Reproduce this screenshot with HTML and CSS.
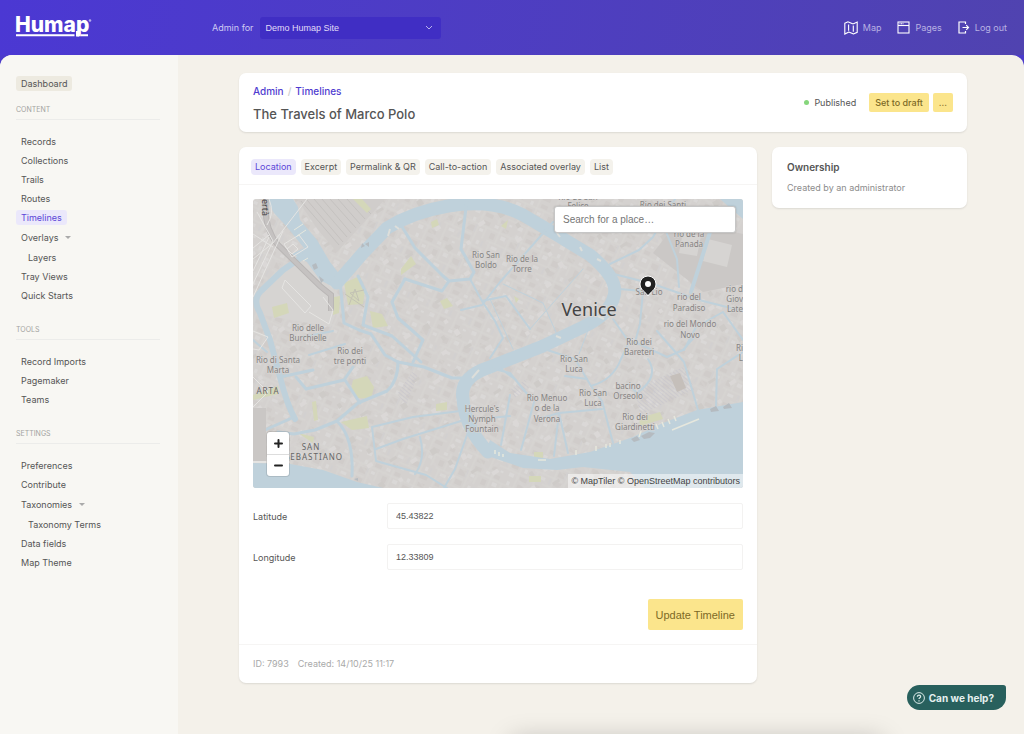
FILE: index.html
```
<!DOCTYPE html>
<html lang="en">

<head>
    <meta charset="UTF-8">
    <meta name="viewport" content="width=device-width, initial-scale=1.0">
    <title>The Travels of Marco Polo - Humap Admin</title>
    <link rel="stylesheet" href="styles.css">
</head>

<body>
    <header class="topbar">
        <a href="#" class="logo" aria-label="Humap">
            <svg width="78" height="24" viewBox="0 0 78 24">
                <text class="logo-text" x="-1" y="16">Humap</text>
                <path d="M0 19.300h58.500M65 19.300h7" stroke="#fff" stroke-width="2" />
                <path d="M61.500 15v5.500" stroke="#fff" stroke-width="3" />
                <circle cx="74" cy="4.500" r="1.300" fill="#b3a9ec" />
            </svg>
        </a>
        <div class="site-picker">
            <label for="site">Admin for</label>
            <div class="select-wrap">
                <select id="site">
                    <option>Demo Humap Site</option>
                </select>
                <svg class="chevron" width="8" height="6" viewBox="0 0 8 6" fill="none" stroke="#b9b2ee">
                    <path d="M1 1l3 3 3-3" />
                </svg>
            </div>
        </div>
        <nav class="topnav">
            <a href="#">
                <svg width="14" height="14" viewBox="0 0 14 14" fill="none" stroke="#fff" stroke-width="1.100">
                    <path d="M.8 2.200l2.700-1.200q.6-.2 1 .1l4 1.600q.5.200 1 0L13.200 1v10.300l-3.200 1.500q-.6.200-1-.1l-3.600-1.500q-.6-.2-1 0L.8 13z" />
                    <path d="M4.600 3.500v6.200M9.300 4.500v6.200" />
                </svg>
                <span>Map</span>
            </a>
            <a href="#">
                <svg width="13" height="13" viewBox="0 0 13 13" fill="none" stroke="#fff" stroke-width="1.100">
                    <rect x="1" y="1" width="11" height="11" />
                    <path d="M1 4.500h11" />
                    <path d="M2.500 2.700h4" stroke-dasharray="1 .5" />
                </svg>
                <span>Pages</span>
            </a>
            <a href="#">
                <svg width="12" height="13" viewBox="0 0 12 13" fill="none" stroke="#fff" stroke-width="1.200">
                    <path d="M7.500 3V1H1v11h6.500v-2" />
                    <path d="M4.500 6.500h6M8.200 4.200l2.300 2.300-2.300 2.300" />
                </svg>
                <span>Log out</span>
            </a>
        </nav>
    </header>

    <div class="page">
        <aside class="sidebar">
            <a href="#" class="pill dashboard">Dashboard</a>

            <h2>Content</h2>
            <ul>
                <li><a href="#">Records</a></li>
                <li><a href="#">Collections</a></li>
                <li><a href="#">Trails</a></li>
                <li><a href="#">Routes</a></li>
                <li><a href="#" class="active">Timelines</a></li>
                <li class="group"><a href="#">Overlays</a><span class="caret"></span></li>
                <li class="group sub"><a href="#">Layers</a></li>
                <li><a href="#">Tray Views</a></li>
                <li><a href="#">Quick Starts</a></li>
            </ul>

            <h2>Tools</h2>
            <ul>
                <li><a href="#">Record Imports</a></li>
                <li><a href="#">Pagemaker</a></li>
                <li><a href="#">Teams</a></li>
            </ul>

            <h2>Settings</h2>
            <ul>
                <li><a href="#">Preferences</a></li>
                <li><a href="#">Contribute</a></li>
                <li class="group"><a href="#">Taxonomies</a><span class="caret"></span></li>
                <li class="group sub"><a href="#">Taxonomy Terms</a></li>
                <li><a href="#">Data fields</a></li>
                <li><a href="#">Map Theme</a></li>
            </ul>
        </aside>

        <main class="content">
            <section class="card title-card">
                <div>
                    <div class="breadcrumb"><a href="#">Admin</a><span>/</span><a href="#">Timelines</a></div>
                    <h1>The Travels of Marco Polo</h1>
                </div>
                <div class="actions">
                    <span class="status">Published</span>
                    <button class="btn">Set to draft</button>
                    <button class="btn more">...</button>
                </div>
            </section>

            <section class="card editor">
                <nav class="tabs">
                    <a href="#" class="active">Location</a>
                    <a href="#">Excerpt</a>
                    <a href="#">Permalink &amp; QR</a>
                    <a href="#">Call-to-action</a>
                    <a href="#">Associated overlay</a>
                    <a href="#">List</a>
                </nav>

                <form class="editor-body" onsubmit="return false">
                    <div class="map">
                        <svg class="map-canvas" viewBox="0 0 490 289" preserveAspectRatio="xMidYMid slice">
                            <defs>
                                <pattern id="blocks" width="46" height="38" patternUnits="userSpaceOnUse" patternTransform="rotate(24)">
                                    <path d="M0 7h46M0 19h30M12 29h34M9 0v19M21 7v22M33 0v38M4 19v19M41 7v12" stroke="#dcdad8" stroke-width=".8" />
                                    <path d="M2 1h4v3H2zM12 9h5v4h-5zM25 2h3v4h-3zM35 10h4v3h-4zM7 22h6v3H7zM24 31h5v4h-5zM37 22h3v4h-3zM15 33h3v2h-3z" fill="#dedddc" />
                                    <path d="M11 1h6v4h-6zM1 10h5v6H1zM23 10h7v6h-7zM36 1h7v4h-7zM6 32h5v4H6zM23 21h7v5h-7zM35 31h8v4h-8z" fill="#cdc9c6" />
                                    <path d="M18 20v7M43 21v6M31 8v8" stroke="#c7c7d3" stroke-width=".6" />
                                </pattern>
                                <pattern id="blocks2" width="62" height="54" patternUnits="userSpaceOnUse" patternTransform="rotate(-33)">
                                    <path d="M0 12h40M20 31h42M8 0v54M29 12v19M48 0v31" stroke="#d9d7d5" stroke-width=".8" />
                                    <path d="M12 15h6v4h-6zM34 4h5v6h-5zM51 35h7v4h-7zM31 44h4v4h-4z" fill="#dfdddc" />
                                    <path d="M20 2h4v5h-4zM34 23h8v3h-8zM11 37h6v6h-6z" fill="#cac6c4" />
                                </pattern>
                                <pattern id="hatch" width="3" height="3" patternUnits="userSpaceOnUse" patternTransform="rotate(40)">
                                    <path d="M0 0h3" stroke="#c3c2cb" />
                                </pattern>
                            </defs>

                            <rect width="490" height="289" fill="#d4d1cf" />
                            <g opacity=".6">
                                <rect width="490" height="289" fill="url(#blocks)" />
                                <rect width="490" height="289" fill="url(#blocks2)" />
                            </g>

                            <!-- station and rail yard -->
                            <path d="M44 0h88l-8 9-40 44-19-22z" fill="#d0cdcb" />
                            <g stroke="#c2bfbd" stroke-width=".8">
                                <path d="M48 2l38 44M54 1l36 42M61 0l33 38M69 0l29 34M77 0l26 29M85 0l22 25M94 0l18 20M103 0l15 15" />
                            </g>
                            <path d="M400 54l26-33 64 14v50l-40 8z" fill="#cbc8c6" />
                            <path d="M430 33l18 4-4 20-18-3zM455 40l24 6-5 22-24-6z" fill="#d6d4d2" />
                            <path d="M382 190l48-22 12 22-55 26z" fill="url(#hatch)" />
                            <path d="M144 195l15-22 6 3-12 30zM258 190l14-9 4 8-14 10z" fill="url(#hatch)" />
                            <path d="M417 177l10-3 6 15-9 4z" fill="#c5bfba" />
                            <path d="M0 101l20-26 27-18 41 41-10 30-74-13z" fill="#d6d4d2" />

                            <!-- parks -->
                            <g fill="#d4d7b9">
                                <path d="M91 84l16-7 5 14-2 14-15 1zM81 98l6-1-1 17-6 2zM19 108l15-4 2 10-15 5zM100 0h9l9 10-4 4zM148 70l10-13 5 8-15 11zM178 23l6-3 2 6-7 3zM187 102l7-3 6 8-9 3zM117 112l12 3 6 12-15 2z" />
                                <path d="M100 181l14-4 7 11-3 12-13-1-7-9zM88 223l26-6 2 12-17 2zM183 205l11-2v8l-11 1zM59 203l4-1 2 19-4 1zM45 234l16 4-1 6zM386 219l21-6 3 7-23 7zM248 27l7-6-2 9zM261 97l5 3-3 4zM281 253h9v6h-9zM276 277h12v6h-12zM0 196l25-9v8L0 201z" />
                            </g>

                            <!-- water -->
                            <g fill="#bfd1db">
                                <path d="M13 0h27l5 8 2 13 17 20 13 22 10 13-7 12-13-7-13-18-15-8 12-6-17-21-13-14z" />
                                <path d="M0 264l37 1 33 6 34 12 26 6H0z" />
                                <path d="M237 241l20 13 40 6 40-7 43-15 30-14 34-13 46-8v86H392l-15-16-47-5-26 3-34-2-38-13z" />
                                <path d="M467 0h23v20z" />
                            </g>
                            <g fill="none" stroke="#bfd1db" stroke-linecap="round" stroke-linejoin="round">
                                <path d="M84 84L110 54L134 29Q160 13 195 7Q240 0 270 16L304 36L337 56Q366 80 361 97Q357 115 330 128L290 147L237 168Q206 178 210 200Q212 229 235 253" stroke-width="13" />
                                <path d="M52 56L30 71L8 92Q-1 101 7 114L17 141L27 178Q34 206 42 220" stroke-width="6" />
                                <g stroke-width="3">
                                    <path d="M87 82L91 124L106 131L118 135L132 156L145 163L171 168L199 179L210 179" />
                                    <path d="M105 77L115 98L110 126L139 137L168 163" />
                                    <path d="M148 26L162 49L190 77L196 82L217 80L221 73L208 50L214 0M196 82L189 92L152 80" />
                                    <path d="M217 80L229 102L242 122L250 139L237 159M208 111L229 106L247 83L300 23" stroke-width="2" />
                                    <path d="M152 80L139 103L145 119L170 141L160 163" />
                                    <path d="M145 163Q145 182 134 192L105 204L84 222L62 231L41 235L25 233M84 222Q101 239 99 277M92 181L107 204M43 178L53 190L91 181L100 168M27 178L60 171M12 231L41 218" />
                                    <path d="M119 228L160 218L207 212M119 228L123 262L173 276L194 289M123 250L150 240L208 222M167 238Q173 260 162 275M214 236L202 270L191 289" stroke-width="2" />
                                </g>
                                <g stroke-width="2">
                                    <path d="M357 65L386 51L400 38L422 0M357 74L400 85L446 101L490 112M410 25L424 60L426 88" />
                                    <path d="M458 30L438 93" stroke-width="4" />
                                    <path d="M366 90L390 92L387 125L382 143L414 158L430 151L443 136" />
                                    <path d="M360 120L376 143L368 160Q360 181 338 187L322 160L291 150" />
                                    <path d="M404 132L425 156L431 163L445 211M470 113L490 141M463 208L464 170L490 153M431 151L443 128L470 113" />
                                    <path d="M338 187L349 202L360 244M312 177L334 180M395 160Q407 178 384 194L375 185" />
                                    <path d="M237 169L257 174L270 190L281 203M247 169L263 181M281 203L268 251M289 219L306 214L301 257M306 214L315 254M257 196L248 246M306 214L349 210M237 219L257 217" />
                                    <path d="M229 102L253 97L277 130M0 141L14 153M50 138L80 132M56 156L92 145" />
                                    <path d="M237 100L260 150M277 130L330 70M337 126L326 155M250 85L290 104L306 140" stroke-width="1" />
                                </g>
                            </g>

                            <!-- roads and jetties -->
                            <path d="M13 0Q10 28 25 46L67 87L78 96v16" fill="none" stroke="#bab7b6" stroke-width="6" />
                            <path d="M13 0Q10 28 25 46L67 87L78 96v16" fill="none" stroke="#c5c2c1" stroke-width="4" />
                            <g fill="none" stroke="#e5e4e2">
                                <path d="M0 85L20 42L4 13M0 72L16 38M0 60L20 44L54 0M0 49l16-13M0 35l20 13M16 0Q22 14 14 26M0 98L30 32" />
                                <path d="M31 45l15-9 9 12-16 10zM34 50l6-5 5 5-6 5zM56 113l20 12 4-14-10-13M32 81l26 26-6 7-23-25zM0 132l15 6-9 13-6-1M0 178l15 15-15 15" />
                            </g>
                            <path d="M0 209h13v54H0z" fill="#cac7c5" />
                            <path d="M0 263h37" stroke="#e5e4e2" stroke-width="2" />
                            <path d="M92 95l19 13M96 106l6-16 4 12-9-8 14-3" fill="none" stroke="#c3c2b4" />
                            <path d="M41 31l9-6M44 37l9-6M50 62l5-3" fill="none" stroke="#e6e7dd" />
                            <path d="M419 231l27-11M242 255v-4m4 6v-4m4 5v-3m35 6h8m30-5v-5m20 1v-5m10 2v-4m4 3v-4m10 1v-4m19-3l2-6m17-2l-2-5m8 3l-2-5m8 2l-2-5m8 2l-2-5" fill="none" stroke="#e6e7dd" stroke-width="1.500" />
                            <path d="M219 179l7-8M137 30l-2 7M142 27l4 3M304 34l3 4m20 10l2 4m15 8l4 2m-3 55l6 3m-48 17l5 2" stroke="#dddeda" stroke-width="2" />
                            <g fill="#b5bbc0">
                                <path d="M378 240l6-3 3 4-6 2zM388 237l8-4 6 1-5 5-6 1zM457 210l6-3 3 5-8 1zM470 208l6-4 3 5-8 1zM59 66l4-2 2 5-4 2zM66 77l5 4-3 3zM112 45l4-2v5zM101 280l4-1v3zM109 44l3 3-4 2z" />
                            </g>

                            <!-- place labels -->
                            <g class="label">
                                <text x="233" y="59">Rio San</text><text x="233" y="69">Boldo</text>
                                <text x="269" y="63">Rio de la</text><text x="269" y="73">Torre</text>
                                <text x="55" y="132">Rio delle</text><text x="55" y="142">Burchielle</text>
                                <text x="97" y="155">Rio dei</text><text x="97" y="165">tre ponti</text>
                                <text x="25" y="164">Rio di Santa</text><text x="25" y="174">Marta</text>
                                <text x="325" y="1">Rio de San</text><text x="325" y="10">Felice</text>
                                <text x="410" y="9">Rio dei Santi</text>
                                <text x="436" y="38">rio de la</text><text x="436" y="48">Panada</text>
                                <text x="396" y="86">San</text><text x="396" y="96">San Lio</text>
                                <text x="436" y="101">rio del</text><text x="436" y="112">Paradiso</text>
                                <text x="437" y="128">rio del Mondo</text><text x="437" y="139">Novo</text>
                                <text x="386" y="146">Rio dei</text><text x="386" y="156">Bareteri</text>
                                <text x="321" y="163">Rio San</text><text x="321" y="173">Luca</text>
                                <text x="340" y="197">Rio San</text><text x="340" y="207">Luca</text>
                                <text x="375" y="190">bacino</text><text x="375" y="200">Orseolo</text>
                                <text x="294" y="202">Rio Menuo</text><text x="294" y="212">o de la</text><text x="294" y="223">Verona</text>
                                <text x="382" y="221">Rio dei</text><text x="382" y="231">Giardinetti</text>
                                <text x="229" y="213">Hercule's</text><text x="229" y="223">Nymph</text><text x="229" y="233">Fountain</text>
                            </g>
                            <g class="label edge">
                                <text x="490" y="93">rio d</text><text x="490" y="103">Giov</text><text x="490" y="113">Late</text>
                                <text x="490" y="152">Ri</text><text x="490" y="162">L</text>
                            </g>
                            <text class="road-label" transform="translate(9 0) rotate(90)">ertà</text>
                            <g class="district">
                                <text x="15" y="195">ARTA</text>
                                <text x="58" y="251">SAN</text>
                                <text x="61" y="261">SEBASTIANO</text>
                            </g>
                            <text class="city" x="336" y="117">Venice</text>

                            <path d="M395 97c-2-4-8-6-8-12a8 8 0 0 1 16 0c0 6-6 8-8 12z" fill="#222" stroke="#fff" />
                            <circle cx="395" cy="85" r="3" fill="#fff" />
                        </svg>
                        <input type="search" class="place-search" placeholder="Search for a place…" aria-label="Search for a place">
                        <div class="zoom">
                            <button type="button" aria-label="Zoom in"><svg width="9" height="9" viewBox="0 0 9 9"><path d="M1 4.500h7M4.500 1v7" /></svg></button>
                            <button type="button" aria-label="Zoom out"><svg width="9" height="9" viewBox="0 0 9 9"><path d="M1 4.500h7" /></svg></button>
                        </div>
                        <div class="attribution"><a href="#">© MapTiler</a> <a href="#">© OpenStreetMap contributors</a></div>
                    </div>

                    <div class="field">
                        <label for="lat">Latitude</label>
                        <input type="text" id="lat" value="45.43822">
                    </div>
                    <div class="field">
                        <label for="lng">Longitude</label>
                        <input type="text" id="lng" value="12.33809">
                    </div>
                    <div class="submit-row">
                        <button class="btn submit">Update Timeline</button>
                    </div>
                </form>

                <footer class="meta"><span>ID: 7993</span><span>Created: 14/10/25 11:17</span></footer>
            </section>

            <section class="card ownership">
                <h3>Ownership</h3>
                <p>Created by an administrator</p>
            </section>
        </main>
    </div>

    <div class="tray-shadow"></div>

    <button class="help">
        <svg width="12" height="12" viewBox="0 0 12 12" fill="none" stroke="#dcebe9">
            <circle cx="6" cy="6" r="5.400" />
            <path d="M4.400 4.800c0-2.200 3.300-2.100 3.200-.1 0 1.100-1.600 1.200-1.600 2.400" stroke-width="1.200" />
            <path d="M6 8.200v1.200" stroke-width="1.200" />
        </svg>
        Can we help?
    </button>
</body>

</html>
```

FILE: styles.css
```
* {
    box-sizing: border-box;
}

body {
    margin: 0;
    font-family: Inter, "Liberation Sans", sans-serif;
    font-size: 9px;
    line-height: 15px;
    color: #555;
    background: linear-gradient(100deg, #4b38d3, #5043b0) top / 100% 55px no-repeat #4b3acb;
    min-height: 100vh;
    display: flex;
    flex-direction: column;
}

a {
    color: inherit;
    text-decoration: none;
}

h1,
h2,
h3,
p,
ul {
    margin: 0;
    padding: 0;
    font-weight: normal;
}

ul {
    list-style: none;
}

button,
input,
select {
    font-family: "Liberation Sans", Arial, sans-serif;
    font-size: 9px;
    color: inherit;
    margin: 0;
}

button {
    border: none;
    cursor: pointer;
}

/* Header */
.topbar {
    height: 55px;
    padding: 0 17px 0 16px;
    display: flex;
    align-items: center;
    color: #cfcaf3;
}

.logo {
    width: 196px;
    height: 24px;
}

.logo svg {
    display: block;
    overflow: visible;
}

.logo-text {
    font-size: 21px;
    font-weight: 800;
    fill: #fff;
}

.site-picker {
    display: flex;
    align-items: center;
    gap: 7px;
}

.select-wrap {
    position: relative;
}

.select-wrap select {
    width: 181px;
    height: 22px;
    padding: 0 5px;
    appearance: none;
    border: none;
    border-radius: 3px;
    background: #402ec4;
    color: #e0dcf8;
}

.chevron {
    position: absolute;
    right: 8px;
    top: 8px;
}

.topnav {
    margin-left: auto;
    display: flex;
    gap: 16px;
    color: #b9b2e3;
}

.topnav a {
    display: flex;
    align-items: center;
    gap: 5px;
}

/* Sidebar */
.page {
    flex: 1;
    display: flex;
    background: #f4f1ea;
    border-radius: 12px 12px 0 0;
    overflow: hidden;
}

.sidebar {
    width: 178px;
    flex-shrink: 0;
    padding: 21px 18px 20px 16px;
    background: #f8f7f3;
}

.sidebar a {
    display: inline-block;
    padding: 0 5px;
    border-radius: 3px;
}

.sidebar .dashboard {
    background: #edeae0;
    margin-bottom: 13px;
}

.sidebar h2 {
    font-size: 7px;
    line-height: 12px;
    padding-bottom: 3px;
    border-bottom: 1px solid #ececea;
    margin-bottom: 12px;
    text-transform: uppercase;
    color: #a3a3a1;
}

.sidebar ul {
    margin-bottom: 19px;
}

.sidebar li {
    height: 19px;
    display: flex;
    align-items: center;
}

.sidebar .group {
    height: 20px;
}

.sidebar .sub {
    padding-left: 7px;
}

.sidebar .active {
    background: #ebe8fb;
    color: #5b46d8;
}

.caret {
    border: 3px solid transparent;
    border-top-color: #aaa;
    border-bottom: none;
    margin-left: 2px;
}

/* Content */
.content {
    flex: 1;
    padding: 18px 57px 51px 61px;
    display: grid;
    grid-template-columns: 1fr 195px;
    gap: 15px;
    align-items: start;
    align-content: start;
}

.card {
    background: #fff;
    border-radius: 7px;
    box-shadow: 0 1px 2px rgba(0, 0, 0, 0.1);
}

.title-card {
    grid-column: 1 / -1;
    padding: 8px 14px;
    display: flex;
    justify-content: space-between;
    align-items: center;
}

.breadcrumb {
    line-height: 20px;
    font-weight: 500;
    font-size: 10px;
    color: #4f3cd0;
}

.breadcrumb span {
    margin: 0 4px;
    color: #ccc;
}

.title-card h1 {
    font-size: 13px;
    line-height: 19px;
    padding-top: 4px;
    font-weight: 500;
}

.actions {
    display: flex;
    align-items: center;
    gap: 4px;
}

.status {
    display: flex;
    align-items: center;
    gap: 5px;
    margin-right: 9px;
}

.status::before {
    content: "";
    width: 5px;
    height: 5px;
    border-radius: 50%;
    background: #86d67c;
}

.btn {
    height: 19px;
    padding: 0 6px;
    border-radius: 2px;
    background: #fbe58c;
    color: #7d6a26;
    font-family: Inter, "Liberation Sans", sans-serif;
    font-weight: 500;
}

.tabs {
    display: flex;
    gap: 5px;
    padding: 12px 12px 9px;
    border-bottom: 1px solid #f6f5f4;
}

.tabs a {
    padding: 0 4px;
    line-height: 16px;
    border-radius: 4px;
    background: #f4f2ec;
}

.tabs .active {
    background: #ebe8fb;
    color: #5b46d8;
}

.editor-body {
    padding: 14px;
}

.map {
    position: relative;
    height: 289px;
    border-radius: 3px;
    overflow: hidden;
    margin-bottom: 15px;
}

.map-canvas {
    display: block;
    width: 100%;
    height: 100%;
}

.label {
    font-family: "Noto Sans", sans-serif;
    font-size: 8px;
    text-anchor: middle;
    fill: #858382;
    stroke: #d8d5d3;
    stroke-width: 1px;
    paint-order: stroke;
}

.label.edge {
    text-anchor: end;
}

.road-label {
    font: 9px "Noto Sans", sans-serif;
    fill: #444;
}

.district {
    font-family: "Noto Sans", sans-serif;
    font-size: 8px;
    letter-spacing: 1px;
    text-anchor: middle;
    fill: #666;
}

.city {
    font-family: "Noto Sans", sans-serif;
    font-size: 18px;
    text-anchor: middle;
    fill: #444;
    stroke: #d8d5d3;
    stroke-width: 2px;
    paint-order: stroke;
}

.place-search {
    position: absolute;
    top: 7px;
    right: 7px;
    width: 182px;
    height: 27px;
    padding: 0 8px;
    border: 1px solid #c6c6c6;
    border-radius: 3px;
    background: #fff;
    box-shadow: 0 0 2px rgba(0, 0, 0, 0.2);
    font-size: 10px;
}

.place-search::placeholder {
    color: #757575;
}

.zoom {
    position: absolute;
    left: 14px;
    bottom: 12px;
    width: 22px;
    border-radius: 3px;
    background: #fff;
    box-shadow: 0 0 0 1px rgba(0, 0, 0, 0.1);
}

.zoom button {
    display: flex;
    align-items: center;
    justify-content: center;
    width: 22px;
    height: 22px;
    padding: 0;
    background: none;
}

.zoom button + button {
    border-top: 1px solid #ddd;
}

.zoom path {
    stroke: #222;
    stroke-width: 2px;
    stroke-linecap: round;
}

.attribution {
    position: absolute;
    right: 0;
    bottom: 0;
    padding: 0 3px;
    line-height: 14px;
    font-family: "Liberation Sans", Arial, sans-serif;
    color: #444;
    background: rgba(255, 255, 255, 0.5);
}

.field {
    display: grid;
    grid-template-columns: 134px 1fr;
    align-items: center;
    margin-bottom: 15px;
}

.field input {
    height: 26px;
    width: 100%;
    padding: 0 8px;
    border: 1px solid #f3f2f1;
    border-radius: 2px;
}

.submit-row {
    display: flex;
    justify-content: flex-end;
    padding-top: 14px;
}

.submit {
    height: 31px;
    padding: 0 8px;
    font-family: "Liberation Sans", Arial, sans-serif;
    font-size: 11px;
}

.meta {
    display: flex;
    gap: 9px;
    padding: 11px 14px 12px;
    border-top: 1px solid #f6f5f4;
    color: #a9a9a9;
}

.ownership {
    padding: 13px 15px;
}

.ownership h3 {
    font-weight: 600;
    font-size: 10px;
    margin-bottom: 5px;
}

.ownership p {
    color: #8c8c8c;
}

.tray-shadow {
    position: fixed;
    left: 50%;
    bottom: -26px;
    width: 370px;
    height: 20px;
    box-shadow: 0 0 26px rgba(0, 0, 0, 0.25);
}

.help {
    position: fixed;
    right: 18px;
    bottom: 24px;
    height: 25px;
    padding: 0 12px 0 6px;
    display: flex;
    align-items: center;
    gap: 4px;
    border-radius: 13px 3px 13px 13px;
    background: #28605d;
    color: #e6f1f0;
    font-family: Inter, "Liberation Sans", sans-serif;
    font-size: 10px;
    font-weight: 700;
}
```
